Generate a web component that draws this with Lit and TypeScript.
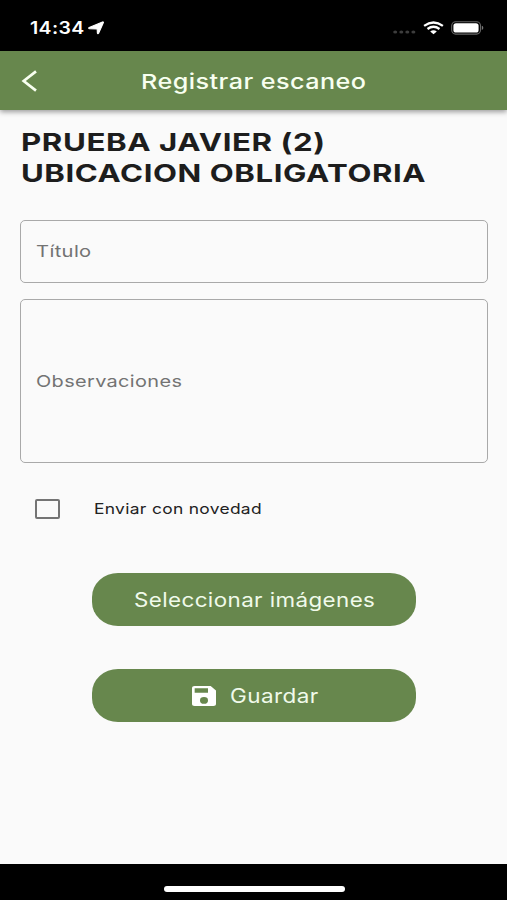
import { LitElement, html, css } from "lit";
import { customElement, property, query } from "lit/decorators.js";

/** One line of text, widened horizontally to fill a given width. */
@customElement("wide-text")
class WideText extends LitElement {
  @property({ type: Number }) width = 100;
  @query("span") private label!: HTMLSpanElement;

  static styles = css`
    :host { display: block; flex: none; white-space: nowrap; text-align: left; letter-spacing: 0.018em; }
    span { display: inline-block; transform-origin: left center; }
  `;

  render() {
    return html`<span><slot></slot></span>`;
  }

  updated() {
    this.style.width = `${this.width}px`;
    const natural = this.label.offsetWidth;
    if (natural) this.label.style.transform = `scaleX(${this.width / natural})`;
  }
}

@customElement("status-bar")
class StatusBar extends LitElement {
  static styles = css`
    :host { display: flex; height: 51px; box-sizing: border-box; padding: 4px 23px 0 30px; align-items: center; background: #000; color: #fff; }
    .time { font-size: 17px; font-weight: 600; line-height: 20px; }
    .arrow { margin-left: 3px; }
    .dots { margin-left: auto; margin-top: 8px; }
    .wifi { margin-left: 7px; }
    .battery { margin-left: 7px; }
    svg { display: block; flex: none; }
  `;
  render() {
    return html`
      <wide-text class="time" width="55">14:34</wide-text>
      <svg class="arrow" width="17" height="14" viewBox="0 0 17 14">
        <path d="M1.2 6.4 14.5 1c.8-.3 1.2.1.8.8L10.6 12.3c-.4.8-1.2.6-1.2-.2L9.2 7.9 1.5 7.6C.5 7.5.5 6.7 1.2 6.4Z" fill="#fff" stroke="#fff" stroke-width="1.1" stroke-linejoin="round" />
      </svg>
      <svg class="dots" width="23" height="4" viewBox="0 0 23 4" fill="#3d3d3d">
        <ellipse cx="2.2" cy="2" rx="2" ry="1.6" /><ellipse cx="8.3" cy="2" rx="2" ry="1.6" />
        <ellipse cx="14.3" cy="2" rx="2" ry="1.6" /><ellipse cx="20.4" cy="2" rx="2" ry="1.6" />
      </svg>
      <svg class="wifi" width="21" height="14" viewBox="0 0 21 14" fill="none" stroke="#fff" stroke-width="2.3">
        <path d="M1.1 4.9Q10.5-1.9 19.9 4.9" /><path d="M4.5 8Q10.5 3.6 16.5 8" />
        <path d="M7.2 10.4Q10.5 8 13.8 10.4L10.5 13.3Z" fill="#fff" stroke="none" />
      </svg>
      <svg class="battery" width="33" height="14" viewBox="0 0 33 14">
        <rect x=".7" y=".7" width="28.8" height="12.4" rx="4" fill="none" stroke="#666" stroke-width="1.1" />
        <rect x="2.4" y="2.2" width="25.2" height="9.4" rx="2.6" fill="#fff" />
        <path d="M30.8 4.8c2 .6 2 3.6 0 4.2Z" fill="#777" />
      </svg>
    `;
  }
}

@customElement("app-root")
class AppRoot extends LitElement {
  static styles = css`
    :host { display: flex; flex-direction: column; height: 900px; overflow: hidden; background: #fafafa; font-family: Inter, "Liberation Sans", sans-serif; color: #1d1d1d; }
    status-bar { flex: none; }
    .bar { display: flex; flex: none; align-items: center; height: 59px; box-sizing: border-box; padding-left: 21px; background: #67874d; color: #f8fff0; box-shadow: 0 2px 5px rgba(0, 0, 0, 0.38); z-index: 1; }
    .bar svg { display: block; }
    .title { margin: 2px 0 0 103px; font-size: 20.5px; font-weight: 500; line-height: 28px; }
    main { display: flex; flex: 1; flex-direction: column; padding: 17px 19px 0 20px; }
    h1 { margin: 0 0 31px 1px; font-size: 24.7px; font-weight: 700; line-height: 31px; }
    .field { display: flex; align-items: center; box-sizing: border-box; height: 63px; padding: 0 0 1px 15px; border: 1px solid #a9a9a9; border-radius: 5px; color: #737373; font-size: 16.5px; line-height: 22px; }
    .area { height: 164px; margin-top: 16px; }
    .check { display: flex; align-items: center; height: 20px; margin: 36px 0 54px 15px; font-size: 14.5px; line-height: 20px; color: #222; }
    .box { box-sizing: border-box; width: 25px; height: 20px; margin-right: 34px; border: 2px solid #747474; border-left-width: 2.5px; border-right-width: 2.5px; border-radius: 2px; }
    .button { display: flex; align-items: center; justify-content: center; align-self: center; width: 324px; height: 53px; box-sizing: border-box; margin: 0; padding: 0; border: 0; border-radius: 26px / 24px; background: #67874d; color: #f0faea; font: 400 19.7px/26px Inter, "Liberation Sans", sans-serif; }
    .save { margin-top: 43px; gap: 14px; padding-left: 2px; }
    .save svg { display: block; }
    .home { display: flex; flex: none; justify-content: center; box-sizing: border-box; height: 36px; padding: 22px 0 0 1px; background: #000; }
    .home i { width: 181px; height: 6px; border-radius: 3px; background: #fff; }
  `;
  render() {
    return html`
      <status-bar></status-bar>
      <header class="bar">
        <svg width="17" height="22" viewBox="0 0 17 22" fill="none" stroke="#f8fff0" stroke-width="2.7">
          <path d="M15 1.4 2.7 11 15 20.6" />
        </svg>
        <wide-text class="title" width="226">Registrar escaneo</wide-text>
      </header>
      <main>
        <h1>
          <wide-text width="304">PRUEBA JAVIER (2)</wide-text>
          <wide-text width="405">UBICACION OBLIGATORIA</wide-text>
        </h1>
        <div class="field"><wide-text width="55">Título</wide-text></div>
        <div class="field area"><wide-text width="146">Observaciones</wide-text></div>
        <div class="check"><span class="box"></span><wide-text width="168">Enviar con novedad</wide-text></div>
        <button class="button"><wide-text width="241">Seleccionar imágenes</wide-text></button>
        <button class="button save">
          <svg width="24" height="20" viewBox="3 3 18 18" preserveAspectRatio="none" fill="#fff">
            <path d="M17 3H5a2 2 0 0 0-2 2v14a2 2 0 0 0 2 2h14a2 2 0 0 0 2-2V7l-4-4Zm-5 16a3 3 0 1 1 0-6 3 3 0 0 1 0 6Zm3-10H5V5h10v4Z" />
          </svg>
          <wide-text width="88">Guardar</wide-text>
        </button>
      </main>
      <footer class="home"><i></i></footer>
    `;
  }
}
